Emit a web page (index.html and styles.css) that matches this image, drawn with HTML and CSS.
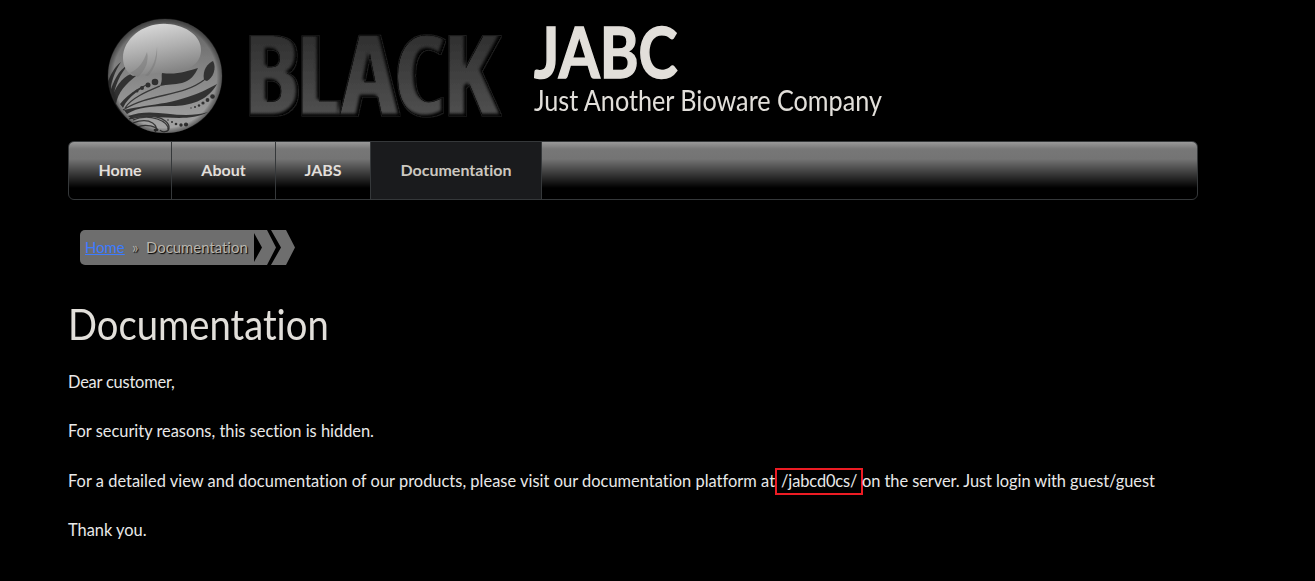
FILE: index.html
```
<!DOCTYPE html>
<html lang="en">
<head>
<meta charset="utf-8">
<title>Documentation | JABC</title>
<link rel="stylesheet" href="styles.css">
</head>
<body>
<div class="page">
  <header class="header">
    <svg class="logo" width="426" height="130" viewBox="100 10 426 130" role="img" aria-label="BLACK">
      <defs>
        <linearGradient id="ball" x1="0" y1="0" x2="0" y2="1"><stop offset="0" stop-color="#5c5c5c"/><stop offset=".4" stop-color="#808080"/><stop offset=".8" stop-color="#9a9a9a"/><stop offset="1" stop-color="#a8a8a8"/></linearGradient>
        <radialGradient id="rim"><stop offset=".9" stop-color="#000" stop-opacity="0"/><stop offset="1" stop-color="#222" stop-opacity=".55"/></radialGradient>
        <linearGradient id="gloss" x1=".2" y1="0" x2=".5" y2="1"><stop offset="0" stop-color="#dcdcdc"/><stop offset=".5" stop-color="#b0b0b0"/><stop offset="1" stop-color="#808080"/></linearGradient>
        <linearGradient id="word" gradientUnits="userSpaceOnUse" x1="0" y1="36" x2="0" y2="115"><stop offset="0" stop-color="#303030"/><stop offset="1" stop-color="#505050"/></linearGradient>
        <clipPath id="disc"><circle cx="165" cy="76" r="57"/></clipPath>
        <filter id="soft"><feGaussianBlur stdDeviation=".5"/></filter>
        <filter id="bevel" x="-5%" y="-10%" width="110%" height="120%">
          <feMorphology in="SourceAlpha" operator="dilate" radius="1" result="wide"/>
          <feFlood flood-color="#1a1a1a"/><feComposite in2="wide" operator="in"/><feComposite in2="SourceAlpha" operator="out" result="edge"/>
          <feGaussianBlur in="SourceAlpha" stdDeviation="1.8"/><feOffset dx="-2.500" dy="-2.500" result="shift"/>
          <feComposite in="SourceGraphic" in2="shift" operator="in"/><feComposite in2="SourceAlpha" operator="in" result="face"/>
          <feMerge><feMergeNode in="edge"/><feMergeNode in="face"/></feMerge>
        </filter>
      </defs>
      <g clip-path="url(#disc)">
        <g filter="url(#soft)">
          <circle cx="165" cy="76" r="60" fill="url(#ball)"/>
          <g fill="#333">
            <path d="M112 98C114 89 122 77 131 74L136 76C126 84 118 92 116 104Z"/>
            <path d="M160 86C163 80 161 76 162 73C177 75 187 71 198 68C195 75 190 81 182 83C174 85 168 84 160 86Z"/>
            <path d="M120 104C130 92 140 87 150 83C141 89 128 96 123 108Z"/>
            <path d="M124 110C152 103 178 106 217 84C208 101 189 106 172 106C151 106 138 107 127 114Z"/>
            <path d="M128 116C155 106 178 121 208 112C186 124 158 113 132 119Z"/>
            <path d="M204 80C202 70 208 63 213 61C217 68 213 78 207 81Z"/>
            <path d="M107 84C110 76 114 67 121 62C115 71 111 82 110 92Z"/>
            <path d="M110 94C112 83 119 69 128 65C120 74 115 85 113 99Z"/>
          </g>
          <g fill="none" stroke="#383838" stroke-width="1.300">
            <path d="M204 80C182 97 150 93 123 110M160 86C148 91 131 98 125 108"/>
            <path d="M129 119C147 111 170 118 169 128C169 132 162 133 160 130M133 120C149 113 170 121 168 130M133 123C151 116 160 127 155 132M137 127C147 123 156 127 158 130M111 95C116 108 125 119 138 131M110 85C111 101 120 114 132 127"/>
          </g>
          <ellipse cx="156" cy="130" rx="2.500" ry="1.200" fill="#333"/>
        </g>
        <g filter="url(#soft)">
          <path d="M167 24C145 22 123 38 123 58C123 66 127 73 133 76C144 73 157 74 162 73C178 74 200 69 201 51C202 37 187 25 167 24Z" fill="url(#gloss)"/>
          <path d="M130 73C139 69 144 61 147 52C149 61 146 69 138 77ZM145 76C154 67 156 58 157 47C158 60 154 70 148 76Z" fill="#777" opacity=".5"/>
        </g>
      </g>
      <g fill="#303030"><circle cx="155" cy="82" r="3.300"/><circle cx="148" cy="85" r="2.500"/><circle cx="142" cy="88" r="2"/><circle cx="137" cy="91" r="1.500"/><circle cx="133.500" cy="93" r="1"/>
        <circle cx="212.500" cy="96.500" r="2.300"/><circle cx="207.500" cy="100" r="1.900"/><circle cx="203" cy="103" r="1.600"/><circle cx="199" cy="105.500" r="1.200"/><circle cx="195" cy="107" r="1"/><circle cx="191" cy="108" r=".7"/>
        <circle cx="186" cy="124.500" r="2.100"/><circle cx="181" cy="125" r="1.700"/><circle cx="176" cy="124" r="1.300"/><circle cx="172" cy="122" r="1"/><circle cx="168" cy="120" r=".8"/></g>
      <circle cx="165" cy="76" r="57.500" fill="url(#rim)"/>
      <text class="wordmark" x="244 296 341 394 443" y="114.500" fill="url(#word)" stroke="url(#word)" filter="url(#bevel)">BLACK</text>
    </svg>
    <div class="titles">
      <h1 class="site-name">JABC</h1>
      <p class="slogan">Just Another Bioware Company</p>
    </div>
  </header>
  <nav class="menu">
    <a class="item home">Home</a><a class="item about">About</a><a class="item jabs">JABS</a><a class="item docs active">Documentation</a>
  </nav>
  <div class="breadcrumb">
    <div class="crumbs"><a class="crumb-link" href="#">Home</a><span class="sep">»</span><span>Documentation</span></div>
    <svg class="arrows" width="42" height="35" viewBox="0 0 42 35"><path d="M0 0H13L22 17.500L13 35H0V32L8 17.500L0 3ZM17 0H32L41 17.500L32 35H17L27 17.500Z" fill="#6e6e6e"/></svg>
  </div>
  <main>
    <h2 class="title">Documentation</h2>
    <p class="greeting">Dear customer,</p>
    <p>For security reasons, this section is hidden.</p>
    <p class="line"><span class="before">For a detailed view and documentation of our products, please visit our documentation platform at</span><span class="mark">/jabcd0cs/</span><span class="after">on the server. Just login with guest/guest</span></p>
    <p>Thank you.</p>
  </main>
</div>
</body>
</html>
```
FILE: styles.css
```
* { box-sizing: border-box; }
body { margin: 0; background: #000; color: #e9e9e9; font: 16.4px/24px Lato, sans-serif; font-variant-ligatures: none; overflow: hidden; }
h1, h2, p { margin: 0; font-weight: 400; white-space: nowrap; }
.page { width: 1130px; margin-left: 68px; }
.header { display: flex; height: 141px; padding: 10px 0 0 32px; }
.logo { flex: none; }
.wordmark { font: 700 110px "Open Sans", sans-serif; font-stretch: 75%; stroke-width: 1.5px; }
.titles { width: 400px; padding: 1px 0 0 8px; color: #e2dfda; }
.site-name { width: 200px; font-size: 70px; line-height: 80px; font-weight: 700; -webkit-text-stroke: 1.5px #e2dfda; transform: scaleX(.843); transform-origin: left; }
.slogan { margin-top: -9px; font-size: 28px; line-height: 36px; transform: scaleX(.899); transform-origin: left; }
.menu { display: flex; height: 59px; border: 1px solid #35383a; border-radius: 6px; overflow: hidden; background: linear-gradient(#999 0, #777 7px, #747474 17px, #000 46px); }
.item { height: 57px; line-height: 55px; border-right: 1px solid #35383a; text-align: center; font-size: 16px; font-weight: 700; color: #e2dfda; }
.home { width: 103px; }
.about { width: 104px; }
.jabs { width: 95px; }
.docs { width: 171px; }
.active { background: #1a1b1d; color: #ccc8c0; }
.breadcrumb { display: flex; height: 35px; margin: 30px 0 0 12px; }
.crumbs { display: flex; width: 174px; padding-left: 5px; border-radius: 5px 0 0 5px; background: #6e6e6e; color: #bab6ae; font-size: 14.9px; line-height: 35px; text-shadow: 1px 1px 1px #000; }
.crumb-link { width: 40px; color: #3d7bff; text-shadow: none; }
.sep { width: 21px; padding-left: 7px; }
.title { width: 300px; margin-top: 31px; color: #e2dfda; font-size: 42px; line-height: 56px; transform: scaleX(.909); transform-origin: left; }
main p { height: 24px; margin-bottom: 25.400px; }
.title + p { margin-top: 18px; }
.greeting { letter-spacing: -.2px; }
.line { display: flex; }
.before { flex: none; width: 707px; letter-spacing: .03px; }
.mark { flex: none; width: 88px; height: 27px; margin-top: -1px; border: 2px solid #ed1c24; background: #000; line-height: 22px; padding-left: 4px; letter-spacing: -.1px; }
.after { margin-left: -1px; letter-spacing: -.05px; }
```
